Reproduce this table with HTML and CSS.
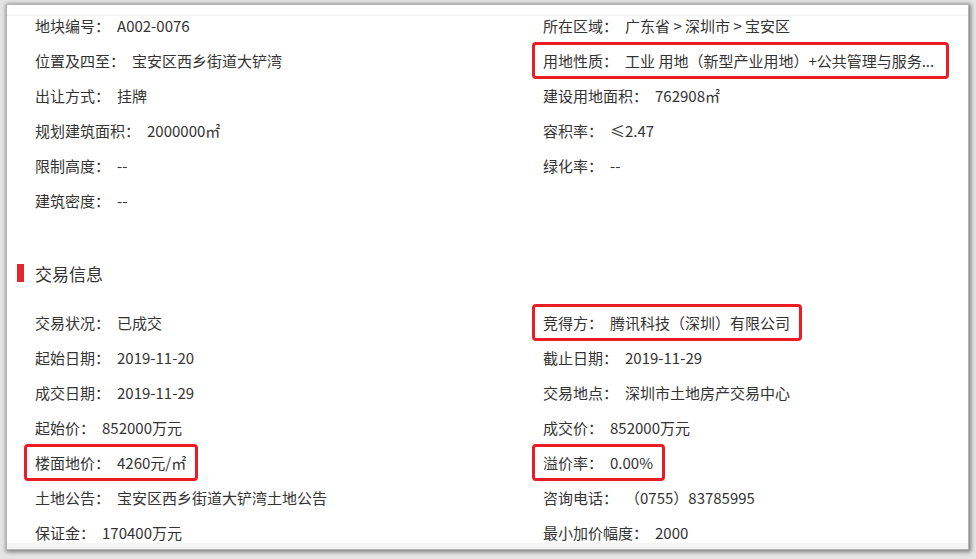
FILE: index.html
```html
<!DOCTYPE html>
<html lang="zh-CN">
<head>
    <meta charset="UTF-8">
    <meta name="viewport" content="width=device-width, initial-scale=1.0">
    <title>地块详情</title>
    <link rel="stylesheet" href="styles.css">
</head>
<body>

    <div class="window">
        <div class="top-strip"></div>

        <div class="content">
            <div class="info-grid first">
                <div class="item"><span class="label">地块编号：</span><span class="value">A002-0076</span></div>
                <div class="item"><span class="label">所在区域：</span><span class="value">广东省 &gt; 深圳市 &gt; 宝安区</span></div>

                <div class="item"><span class="label">位置及四至：</span><span class="value">宝安区西乡街道大铲湾</span></div>
                <div class="item mark wide"><span class="label">用地性质：</span><span class="value">工业 用地（新型产业用地）+公共管理与服务...</span></div>

                <div class="item"><span class="label">出让方式：</span><span class="value">挂牌</span></div>
                <div class="item"><span class="label">建设用地面积：</span><span class="value">762908㎡</span></div>

                <div class="item"><span class="label">规划建筑面积：</span><span class="value">2000000㎡</span></div>
                <div class="item"><span class="label">容积率：</span><span class="value">≤2.47</span></div>

                <div class="item"><span class="label">限制高度：</span><span class="value">--</span></div>
                <div class="item"><span class="label">绿化率：</span><span class="value">--</span></div>

                <div class="item"><span class="label">建筑密度：</span><span class="value">--</span></div>
            </div>

            <h2 class="section-title">交易信息</h2>

            <div class="info-grid">
                <div class="item"><span class="label">交易状况：</span><span class="value">已成交</span></div>
                <div class="item mark"><span class="label">竞得方：</span><span class="value">腾讯科技（深圳）有限公司</span></div>

                <div class="item"><span class="label">起始日期：</span><span class="value">2019-11-20</span></div>
                <div class="item"><span class="label">截止日期：</span><span class="value">2019-11-29</span></div>

                <div class="item"><span class="label">成交日期：</span><span class="value">2019-11-29</span></div>
                <div class="item"><span class="label">交易地点：</span><span class="value">深圳市土地房产交易中心</span></div>

                <div class="item"><span class="label">起始价：</span><span class="value">852000万元</span></div>
                <div class="item"><span class="label">成交价：</span><span class="value">852000万元</span></div>

                <div class="item mark"><span class="label">楼面地价：</span><span class="value">4260元/㎡</span></div>
                <div class="item mark"><span class="label">溢价率：</span><span class="value">0.00%</span></div>

                <div class="item"><span class="label">土地公告：</span><span class="value">宝安区西乡街道大铲湾土地公告</span></div>
                <div class="item"><span class="label">咨询电话：</span><span class="value">（0755）83785995</span></div>

                <div class="item"><span class="label">保证金：</span><span class="value">170400万元</span></div>
                <div class="item"><span class="label">最小加价幅度：</span><span class="value">2000</span></div>
            </div>
        </div>

        <div class="bottom-strip"></div>
    </div>

</body>
</html>
```

FILE: styles.css
```css
/* Reset */
* {
    margin: 0;
    padding: 0;
    box-sizing: border-box;
}

body {
    width: 976px;
    height: 559px;
    overflow: hidden;
    background: #e4e4e4;
    font-family: "Noto Sans CJK SC", "Microsoft YaHei", sans-serif;
    font-size: 15px;
    color: #333;
}

/* Ventana con sombra */
.window {
    margin: 5px 8px 0 7px;
    height: 544px;
    background: #fff;
    display: flex;
    flex-direction: column;
    overflow: hidden;
    box-shadow: 0 0 0 1px #b4b4b4, 1px 1px 4px 2px rgba(0, 0, 0, 0.45);
}

.top-strip {
    height: 11px;
    flex-shrink: 0;
    border-bottom: 1px solid #f1f1f1;
}

.content {
    flex: 1;
    overflow: hidden;
}

.bottom-strip {
    height: 6px;
    flex-shrink: 0;
    background: #f4f4f4;
}

/* Rejilla de datos */
.info-grid {
    display: grid;
    grid-template-columns: 508px 425px;
    padding-left: 28px;
}

.info-grid.first {
    margin-top: -8px;
}

.item {
    height: 35px;
    line-height: 35px;
    display: flex;
    white-space: nowrap;
    min-width: 0;
}

.value {
    margin-left: 7px;
}

/* Recuadros rojos */
.mark {
    position: relative;
    width: fit-content;
}

.mark::after {
    content: "";
    position: absolute;
    top: -1px;
    bottom: -1px;
    left: -11px;
    right: -12px;
    border: 3px solid #ec1c24;
    border-radius: 4px;
}

.mark.wide::after {
    right: -15px;
}

/* Título de sección */
.section-title {
    display: flex;
    align-items: center;
    height: 20px;
    margin: 45px 0 22px 10px;
    font-size: 17px;
    font-weight: normal;
    color: #333;
}

.section-title::before {
    content: "";
    width: 7px;
    height: 18px;
    margin-right: 11px;
    background: #e3262d;
}
```
